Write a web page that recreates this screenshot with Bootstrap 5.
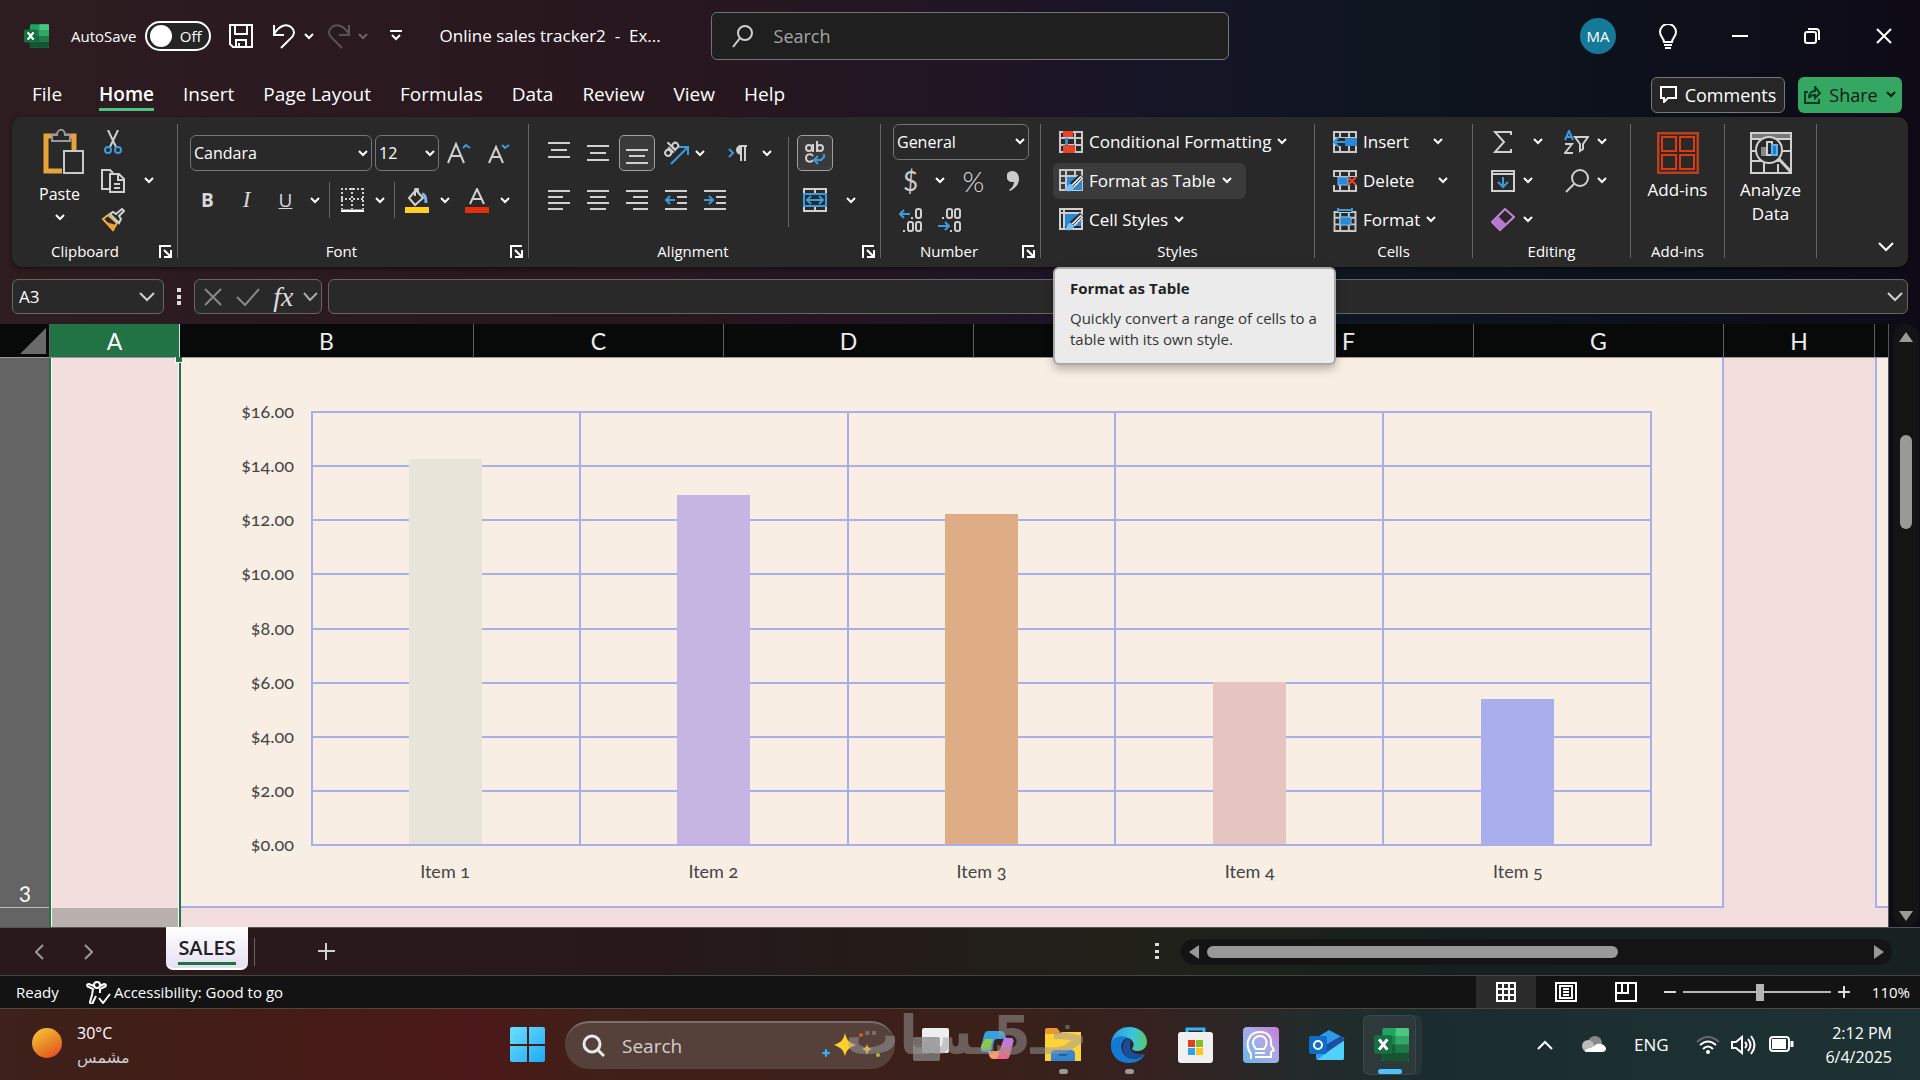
<!DOCTYPE html>
<html lang="en">
<head>
<meta charset="utf-8">
<meta name="viewport" content="width=device-width, initial-scale=1">
<title>Online sales tracker2 - Excel</title>
<link href="https://cdn.jsdelivr.net/npm/bootstrap@5.3.0/dist/css/bootstrap.min.css" rel="stylesheet">
<style>
:root{--ui:"Open Sans","Noto Sans","DejaVu Sans",sans-serif;--line:#a9aeec;--cream:#f8eee4;--pink:#f2dfdd;--panel:#292929;--edge:#666}
body{font-family:var(--ui);font-size:18px;line-height:24px;color:#fff;min-height:100vh;background:#17131f linear-gradient(90deg,#2d1c20 0,#27171e 36%,#1f1524 52%,#161527 60%,#0f1620 72%,#0d111c 84%,#0e0b17 100%)}
button{background:none;border:0;padding:0;color:inherit;display:inline-flex;align-items:center;justify-content:center}
svg{display:block;flex:none}
.ln{fill:none;stroke:#d0d0d0;stroke-width:2}
.bl{stroke:#3b9bdc}
.chev{width:10px;height:7px;fill:none;stroke:#fff;stroke-width:2}
/* title row */
.titlebar{height:72px;padding-left:24px}
.t17{font-size:17px}.t15{font-size:15px}
.asv{width:66px;height:30px;border:2px solid #fff;border-radius:15px;background:#242424;font-size:15px;padding:0 7px 0 3px;justify-content:space-between;margin-left:8px}
.knob{width:22px;height:22px;border-radius:50%;background:#fff}
.doctitle{width:220px;margin-left:34px}
.searchbox{width:518px;height:48px;border:1px solid #757575;border-radius:6px;background:#1f1f1f;margin-left:51px;padding-left:20px;gap:20px}
.searchbox input,.pill input{background:none;border:0;outline:0;color:#aaa;padding:0;min-width:0;flex:1}
.searchbox input::placeholder{color:#a5a5a5}
.avatar{width:36px;height:36px;border-radius:50%;background:#15799a;font-size:15px}
.w72{width:72px;height:44px}
/* tabs */
.tabrow{height:45px;padding:0 18px 0 32px}
.tabs{gap:29px;font-size:19px}
.tabs a{color:#fff;text-decoration:none;height:33px;padding-top:4px;border-bottom:3px solid transparent}
.tabs a.on{font-weight:600;border-color:#4cc582}
.tabs a:first-child{margin-right:8px}
.cbtn{height:36px;border-radius:6px;gap:8px}
.cmt{width:134px;background:#262626;border:1px solid #777}
.share{width:104px;background:#34a762;color:#0c1a12;margin-left:13px}
/* ribbon */
.ribbon{margin:0 12px;height:150px;border-radius:10px;background:var(--panel);box-shadow:0 2px 4px #0006}
.grp{margin:7px 0 9px;border-right:1px solid #666;display:flex;flex-direction:column;position:relative}
.grp .body{flex:1}
.foot{height:19px;display:flex;align-items:center;font-size:15px;line-height:13px;padding-top:6px}
.foot span{flex:1;text-align:center}
.foot button{width:23px}
.two{padding-top:11px;display:flex;flex-direction:column;gap:11px}
.two>div{height:36px;display:flex;align-items:center}
.three{margin-top:-2px}
.three>*{height:39px;display:flex;align-items:center}
.c39{width:39px;height:36px}
.c36{width:36px;height:36px}
.c20{width:20px;height:36px}
.boxed{width:36px;height:36px;border:1px solid #a0a0a0;border-radius:5px;background:#3a3a3a}
.vs{width:1px;height:36px;background:#666}
.form-select.dd{height:36px;background-color:transparent;border:1px solid #757575;border-radius:6px;color:#fff;font-size:16px;line-height:24px;padding:0 20px 0 3px;--bs-form-select-bg-img:url("data:image/svg+xml,%3csvg xmlns='http://www.w3.org/2000/svg' viewBox='0 0 10 7'%3e%3cpath fill='none' stroke='%23fff' stroke-width='2' d='M1 1l4 4 4-4'/%3e%3c/svg%3e");background-position:right 3px center;background-size:10px 7px}
.glyph{font-size:19px;color:#d8d8d8}
.sbtn{height:36px;border-radius:6px;padding:0 8px 0 6px;gap:6px;font-size:17px}
.sbtn.on{background:#3b3b3b;padding-right:14px}
.far{margin-left:18px}
.tip{position:absolute;left:12px;top:143px;width:283px;height:98px;background:#ebebeb;border:2px solid #a8a8a8;border-radius:6px;color:#333;font-size:15px;line-height:21px;padding:9px 0 0 15px;z-index:5;box-shadow:0 4px 10px #0004;white-space:nowrap}
.tip strong{display:block;margin-bottom:9px;color:#222}
.big{line-height:24px;flex-direction:column;font-size:17px}
.paste{width:83px;padding:4px 0 0 12px;font-size:16px}
/* formula row */
.frow{height:57px;padding:12px 12px 0}
.fbox{height:35px;border:1px solid #666;border-radius:6px;background:var(--panel);display:flex;align-items:center}
.fbox input{background:none;border:0;outline:0;color:#fff;width:100%;min-width:0;padding:0 6px}
.fx{font:italic 28px/30px "Liberation Serif",serif;color:#ddd;width:28px}
/* sheet */
.sheetwrap{flex:1;min-height:500px}
.sheet{flex:1;display:grid;grid-template-columns:50px 130px 294fr 250fr 250fr 250fr 250fr 250fr 151px 13px;grid-template-rows:34px 1fr 19px;border-right:1px solid #555}
.hd{background:#070a09;border-right:1px solid #606060;border-bottom:1px solid #999;display:flex;align-items:center;justify-content:center;font-family:Lato,"Open Sans",sans-serif;font-size:23px;padding-top:1px;color:#eee}
.hd.sel{background:#217346;border-right-color:#ddd;color:#fff}
.rowno{background:#646464;display:flex;align-items:flex-end;justify-content:center;font:23px/30px Lato,"Open Sans",sans-serif;border-bottom:1px solid #bbb;font-feature-settings:"onum";padding-bottom:2px}
.acol{position:relative;background:var(--pink);border:solid #217346;border-width:0 2px 0 2px;box-shadow:inset 1px 0 #fff,inset -1px 0 #fff;margin:0 -1px}
.handle{position:absolute;right:-3px;top:-1px;width:7px;height:6px;background:#217346;border:solid #fff;border-width:0 0 1px 1px}
.pinkc{background:var(--pink)}
.bl2{border:solid var(--line);border-width:0 0 2px 2px}
.chartc{grid-column:3/9;background:var(--cream);border:solid var(--line);border-width:0 2px 2px 0;padding:53px 70px 22px 0;display:grid;grid-template-columns:131px 1fr;grid-template-rows:1fr 38px;font-family:Lato,"Open Sans",sans-serif;font-size:18px;color:#444;font-feature-settings:"onum"}
.yax{display:flex;flex-direction:column;justify-content:space-between;text-align:right;padding-right:17px;margin:-11px 0 -9px;line-height:22px}
.plot{display:grid;grid-template:1fr/1fr;border:solid var(--line);border-width:0 0 2px 2px}
.plot>div{grid-area:1/1}
.hl i{flex:1;border-top:2px solid var(--line)}
.bars>div{flex:1 1 0;border-right:2px solid var(--line);display:flex;align-items:flex-end;justify-content:center}
.bars i{width:73px}
.cats{grid-column:2;display:flex;align-items:center;padding-top:12px}
.cats span{flex:1;text-align:center}
.vsb{width:26px;margin:0 1px 0 4px;background:#141414;border-radius:13px;padding:8px 0 6px;display:flex;flex-direction:column;align-items:center}
.thumb{background:#999;border-radius:6px}
/* sheet tabs */
.stabs{height:48px;background:linear-gradient(90deg,#2a191a 0,#27191a 35%,#221d19 50%,#202119 60%,#16211f 75%,#17211f 100%);border-top:1px solid #555}
.stab{width:82px;height:43px;align-self:flex-start;border-radius:0 0 7px 7px;background:linear-gradient(#fff,#e6e0f3);color:#222;margin-left:54px;border-bottom:2px solid #fff;font-weight:600;font-size:20px;margin-top:-1px}
.stab span{border-bottom:3px solid #1f7244;line-height:29px;padding-top:3px}
.hsb{width:711px;height:26px;border-radius:13px;background:#141414;padding:0 8px;gap:8px;margin:0 28px 0 22px}
/* status */
.status{height:34px;background:#131313;border-top:1px solid #444;border-bottom:1px solid #54433a;font-size:15px;padding:0 10px 0 16px}
.vw{width:60px;height:32px}
.vw.on{background:#2b2b2b}
.zoomr{appearance:none;width:148px;height:24px;background:linear-gradient(#b5b5b5,#b5b5b5) center/100% 2px no-repeat;margin:0 7px}
.zoomr::-webkit-slider-thumb{-webkit-appearance:none;width:8px;height:17px;background:#b5b5b5}
/* taskbar */
.taskbar{height:71px;background:linear-gradient(90deg,#3d211a 0,#451c17 14%,#4b1919 25%,#402019 31%,#3a2019 52%,#352220 60%,#232b2b 68%,#1b2c2e 75%,#1d3234 100%);padding:0 28px 0 32px}
.weather{margin-left:15px;width:433px}
.pill{width:330px;height:48px;border-radius:24px;background:#55403a;border-top:2px solid #767170;padding:0 14px 0 17px;margin-left:19px;gap:17px;font-size:19px}
.pill input{color:#ddd}.pill input::placeholder{color:#d5d0ce}
.app{width:66px;height:60px;flex-direction:column;position:relative}
.app.run::after{content:"";position:absolute;bottom:1px;width:9px;height:5px;border-radius:3px;background:#999}
.app.act::before{content:"";position:absolute;left:3px;top:0;width:53px;height:60px;border-radius:6px;background:#ffffff12;border:1px solid #ffffff14;box-shadow:6px 0 0 #ffffff0c}
.app.act svg{position:relative}
.app.act.run::after{width:24px;left:18px;background:#4cc2ff}
.wm{position:absolute;left:845px;top:-11px;font:bold 54px/76px "DejaVu Sans",sans-serif;color:#9c9c9c;opacity:.5;white-space:nowrap;pointer-events:none;z-index:3}
.zz{color:#fff;font-size:16px;line-height:24px}
</style>
</head>
<body class="d-flex flex-column">
<svg width="0" height="0" class="position-absolute" aria-hidden="true">
<symbol id="cv" viewBox="0 0 10 7"><path d="M1 1l4 4 4-4"/></symbol>
<symbol id="launch" viewBox="0 0 13 13"><path d="M1 13V1h11M5 5l6 6M12 5v7H5" fill="none" stroke="#fff" stroke-width="2"/></symbol>
<symbol id="xl" viewBox="0 0 34 32"><path d="M10 0h24v32H8V2a2 2 0 0 1 2-2z" fill="#21a366"/><path d="M21 0h11a2 2 0 0 1 2 2v6H21z" fill="#4cc582"/><path d="M8 8h13v8H8z" fill="#1c8a50"/><path d="M21 8h13v8H21z" fill="#33a866"/><path d="M8 16h13v8H8z" fill="#185c37"/><path d="M21 16h13v8H21z" fill="#1f7a48"/><path d="M8 24h26v6a2 2 0 0 1-2 2H10a2 2 0 0 1-2-2z" fill="#16532f"/><rect y="7" width="18" height="18" rx="2" fill="#17703f"/><path d="M5 11l8 10M13 11L5 21" stroke="#fff" stroke-width="3"/></symbol>
<symbol id="grid" viewBox="0 0 24 22"><path d="M1 1h22v20H1zM1 7h22M1 14h22M7 1v20M16 1v20" fill="none" stroke="#c8c8c8" stroke-width="2"/></symbol>
<symbol id="brush" viewBox="0 0 24 24"><path d="M23 7L13 16" stroke="#292929" stroke-width="6"/><path d="M23 8l-9 9" stroke="#e0e0e0" stroke-width="4"/><path d="M22 9l-8 8" stroke="#333" stroke-width="1"/><path d="M12 15c-4 0-4 5-7 6 3 2 10 2 10-3z" fill="#7cc0f5"/></symbol>
</svg>

<header class="titlebar d-flex align-items-center">
 <svg width="25" height="24"><use href="#xl"/></svg>
 <span class="t15" style="margin-left:22px" id="asl">AutoSave</span>
 <button class="asv" role="switch" aria-checked="false" aria-labelledby="asl"><span class="knob"></span><span>Off</span></button>
 <button class="px-1" style="margin-left:14px" aria-label="Save"><svg width="24" height="24" class="ln" viewBox="0 0 24 24" style="stroke:#fff"><path d="M1 1h22v22H4l-3-3zM6 1v9h12V1M7 23v-7h10v7M10 23v-4"/></svg></button>
 <button style="margin-left:15px" aria-label="Undo"><svg width="24" height="26" class="ln" viewBox="0 0 24 26" style="stroke:#fff"><path d="M2 2v10h10M2 11C7 3 14 0 19 4s3 9-1 12l-9 9"/></svg></button>
 <button class="c20" style="margin-left:3px" aria-label="Undo list"><svg class="chev"><use href="#cv"/></svg></button>
 <button class="ms-1" aria-label="Redo"><svg width="24" height="26" class="ln ms-1" viewBox="0 0 24 26" style="stroke:#555"><path d="M22 2v10H12M22 11C17 3 10 0 5 4s-3 9 1 12l9 9"/></svg></button>
 <button class="c20" style="margin-left:2px" aria-label="Redo list"><svg class="chev" style="stroke:#666"><use href="#cv"/></svg></button>
 <button class="px-1" style="margin-left:13px" aria-label="Customize toolbar"><svg width="12" height="12" class="ln" style="stroke:#fff"><path d="M0 1h12M2 5l4 4 4-4"/></svg></button>
 <span class="doctitle t17 text-nowrap">Online sales tracker2 &nbsp;-&nbsp; Ex...</span>
 <label class="searchbox d-flex align-items-center"><svg width="22" height="24" class="ln" viewBox="0 0 22 24"><circle cx="13" cy="9" r="7"/><path d="M8 14L1 23"/></svg><input type="search" placeholder="Search" aria-label="Search"></label>
 <div class="ms-auto d-flex align-items-center">
  <span class="avatar d-flex align-items-center justify-content-center me-3">MA</span>
  <button class="w72" aria-label="Tips"><svg width="18" height="25" class="ln" viewBox="0 0 18 25" style="stroke:#fff"><path d="M5 18c0-4-4-5-4-10a8 8 0 0 1 16 0c0 5-4 6-4 10zM5 21h8M6 24h6"/></svg></button>
  <button class="w72" aria-label="Minimize"><svg width="16" height="2"><path d="M0 1h16" stroke="#fff" stroke-width="2"/></svg></button>
  <button class="w72" aria-label="Restore"><svg width="16" height="16" class="ln" style="stroke:#fff"><rect x="1" y="4" width="11" height="11" rx="2"/><path d="M4 1h8a3 3 0 0 1 3 3v8"/></svg></button>
  <button class="w72" aria-label="Close"><svg width="16" height="16" class="ln" style="stroke:#fff"><path d="M1 1l14 14M15 1L1 15"/></svg></button>
 </div>
</header>

<div class="tabrow d-flex align-items-center">
 <nav class="tabs d-flex" aria-label="Ribbon tabs"><a href="#">File</a><a href="#" class="on">Home</a><a href="#">Insert</a><a href="#">Page Layout</a><a href="#">Formulas</a><a href="#">Data</a><a href="#">Review</a><a href="#">View</a><a href="#">Help</a></nav>
 <button class="cbtn cmt ms-auto"><svg width="17" height="17" class="ln" style="stroke:#fff"><path d="M1 1h15v11H8l-4 4v-4H1z"/></svg>Comments</button>
 <button class="cbtn share"><svg width="17" height="18" class="ln" style="stroke:#0c3a20"><path d="M4 6H1v11h14v-4M5 12c0-5 3-7 6-7V1l5 6-5 5V9c-3 0-5 1-6 3z"/></svg>Share<svg class="chev" style="stroke:#0c1a12"><use href="#cv"/></svg></button>
</div>

<section class="ribbon d-flex" aria-label="Ribbon">
 <div class="grp" style="width:166px"><div class="body d-flex">
   <button class="big paste justify-content-start"><svg class="ms-2" width="42" height="46" viewBox="0 0 42 46"><path d="M19 43H3V8h28v14" fill="none" stroke="#e8a33a" stroke-width="5"/><path d="M9 13V7h5c0-7 8-7 8 0h5v6z" fill="#292929" stroke="#999" stroke-width="2"/><rect x="21" y="23" width="19" height="22" fill="#292929" stroke="#c8c8c8" stroke-width="2"/></svg><span class="mt-2">Paste</span><svg class="chev mt-2"><use href="#cv"/></svg></button>
   <div class="three">
    <div><button class="c36" aria-label="Cut"><svg width="18" height="24" class="ln" viewBox="0 0 18 24"><path d="M4 0l8 17M14 0L6 17"/><g class="bl"><circle cx="4" cy="20" r="3"/><circle cx="14" cy="20" r="3"/></g></svg></button></div>
    <div><button class="c36" aria-label="Copy"><svg width="24" height="24" class="ln" viewBox="0 0 24 24"><path d="M8 20H1V1h8l3 3M9 5h9l5 5v13H9zM17 5v6h6M13 15h6M13 19h6"/></svg></button><button class="c20 ms-2" aria-label="Copy options"><svg class="chev"><use href="#cv"/></svg></button></div>
    <div><button class="c36" aria-label="Format painter"><svg width="24" height="24" viewBox="0 0 24 24"><path d="M2 11l10 11 4-7-9-8z" fill="#292929" stroke="#efb04a" stroke-width="2"/><path d="M5 14l7 8 3-5z" fill="#efa030"/><path d="M9 6l9 9 2-4-2-3 5-5-2-2-6 5-3-2z" fill="#292929" stroke="#d0d0d0" stroke-width="2"/></svg></button></div>
   </div></div>
   <div class="foot"><span class="ps-1">Clipboard</span><button aria-label="Clipboard settings"><svg width="13" height="13"><use href="#launch"/></svg></button></div></div>

 <div class="grp" style="width:351px"><div class="body two">
   <div style="padding-left:12px"><select class="form-select dd" style="width:182px;margin-right:3px" aria-label="Font"><option>Candara</option></select><select class="form-select dd" style="width:64px" aria-label="Font size"><option>12</option></select>
   <button class="c39" aria-label="Grow font"><svg width="24" height="22" class="ln" viewBox="0 0 24 22"><path d="M1 21L9 2l8 19M4 14h10"/><path class="bl" d="M16 6l3-3 4 3"/></svg></button><button class="c39" aria-label="Shrink font"><svg width="24" height="22" class="ln" viewBox="0 0 24 22"><path d="M3 21L10 5l7 16M5 15h10"/><path class="bl" d="M16 3l3 3 4-3"/></svg></button></div>
   <div style="padding-left:10px"><button class="c39 glyph fw-bold">B</button><button class="c39 glyph fst-italic" style="font-family:'Liberation Serif',serif;font-size:23px">I</button><button class="c39 glyph text-decoration-underline">U</button><button class="c20" aria-label="Underline options"><svg class="chev"><use href="#cv"/></svg></button><span class="vs ms-1"></span>
   <button class="c36 ms-1" aria-label="Borders"><svg width="23" height="24" class="ln" viewBox="0 0 23 24"><path d="M1 0v21M22 0v21M11 0v21M0 1h23M0 11h23" stroke-dasharray="2 2"/><path d="M0 23h23" stroke="#fff" stroke-width="3"/></svg></button><button class="c20" aria-label="Border options"><svg class="chev"><use href="#cv"/></svg></button><span class="vs ms-1"></span>
   <button class="c36 ms-1" aria-label="Fill color"><svg width="24" height="25" viewBox="0 0 24 25"><path d="M4 10l7-8 7 8-8 7zM10 8V2c0-2 3-2 3 0v3" class="ln"/><path d="M17 6c3 0 4 4 4 9" fill="none" stroke="#7ab8ee" stroke-width="3"/><path d="M0 19h24v6H0z" fill="#ffd21f"/></svg></button><button class="c20" aria-label="Fill options"><svg class="chev"><use href="#cv"/></svg></button>
   <button class="c36 ms-1" aria-label="Font color"><svg width="24" height="25" viewBox="0 0 24 25"><path d="M5 16L12 1l7 15M7 11h10" class="ln"/><path d="M0 19h24v6H0z" fill="#e3300b"/></svg></button><button class="c20" aria-label="Font color options"><svg class="chev"><use href="#cv"/></svg></button></div></div>
   <div class="foot"><span>Font</span><button aria-label="Font settings"><svg width="13" height="13"><use href="#launch"/></svg></button></div></div>

 <div class="grp" style="width:352px"><div class="body d-flex">
   <div class="two" style="width:259px;padding-left:10px">
   <div><button class="c39" aria-label="Top align"><svg width="22" height="22" class="ln"><path d="M0 4h22M3 11h16M0 18h22" transform="translate(0 -3)"/></svg></button><button class="c39" aria-label="Middle align"><svg width="22" height="22" class="ln"><path d="M0 4h22M3 11h16M0 18h22"/></svg></button><button class="c39" aria-label="Bottom align"><span class="boxed d-flex align-items-center justify-content-center"><svg width="22" height="22" class="ln"><path d="M0 4h22M3 10h16M0 17h22" transform="translate(0 4)"/></svg></span></button><button class="c39" aria-label="Orientation"><svg width="26" height="26" class="ln" viewBox="0 0 26 26"><g transform="rotate(-45 8 10)"><circle cx="4" cy="10" r="3"/><path d="M8 6v8M11 2v12"/><circle cx="14" cy="10" r="3"/></g><path class="bl" d="M8 24L24 8M16 7h9v8"/></svg></button><button class="c20" style="margin-left:-5px" aria-label="Orientation options"><svg class="chev"><use href="#cv"/></svg></button><button class="c39 ms-2" aria-label="Text direction"><svg width="20" height="16" class="ln" viewBox="0 0 20 16"><path class="bl" d="M1 4l4 4-4 4"/><path d="M13 1v15M17 1v15M19 1h-8"/><path d="M13 1v8a4 4 0 0 1 0-8z" fill="#d0d0d0"/></svg></button><button class="c20" aria-label="Direction options"><svg class="chev"><use href="#cv"/></svg></button></div>
   <div><button class="c39" aria-label="Align left"><svg width="22" height="22" class="ln"><path d="M0 2h22M0 8h15M0 14h22M0 20h15"/></svg></button><button class="c39" aria-label="Align center"><svg width="22" height="22" class="ln"><path d="M0 2h22M3 8h16M0 14h22M3 20h16"/></svg></button><button class="c39" aria-label="Align right"><svg width="22" height="22" class="ln"><path d="M0 2h22M7 8h15M0 14h22M7 20h15"/></svg></button><button class="c39" aria-label="Decrease indent"><svg width="22" height="22" class="ln"><path d="M0 2h22M12 8h10M12 14h10M0 20h22"/><path class="bl" d="M10 11H2M5 7l-4 4 4 4"/></svg></button><button class="c39" aria-label="Increase indent"><svg width="22" height="22" class="ln"><path d="M0 2h22M12 8h10M12 14h10M0 20h22"/><path class="bl" d="M0 11h8M5 7l4 4-4 4"/></svg></button></div></div>
   <span class="vs" style="height:90px;margin-top:13px"></span>
   <div class="two ps-2"><div><button class="boxed" aria-label="Wrap text"><svg width="22" height="26" class="ln" viewBox="0 0 22 26"><circle cx="5" cy="8" r="3"/><path d="M9 4v8M13 1v11M9 20c-2 3-7 2-7-2s5-5 7-2"/><circle cx="16" cy="8" r="3"/><path class="bl" d="M20 14v3l-3 3h-6M14 16l-4 4 4 4"/></svg></button></div>
   <div><button class="c36" aria-label="Merge"><svg width="24" height="24" class="ln" viewBox="0 0 24 24"><path d="M1 1h22v22H1zM12 1v5M12 18v5"/><path class="bl" d="M1 6h22v12H1zM4 12h16M8 8l-4 4 4 4M16 8l4 4-4 4"/></svg></button><button class="c20 ms-2" aria-label="Merge options"><svg class="chev"><use href="#cv"/></svg></button></div></div></div>
   <div class="foot"><span>Alignment</span><button aria-label="Alignment settings"><svg width="13" height="13"><use href="#launch"/></svg></button></div></div>

 <div class="grp" style="width:160px"><div class="body three" style="padding-left:10px">
   <div><select class="form-select dd" style="width:136px;margin-left:2px" aria-label="Number format"><option>General</option></select></div>
   <div><button class="c39" style="font-size:26px;font-family:Lato,sans-serif;color:#ccc">$</button><button class="c20" aria-label="Currency options"><svg class="chev"><use href="#cv"/></svg></button><button class="c39 ms-1" style="font-size:28px;font-family:Lato,sans-serif;font-weight:300;color:#ddd">%</button><button class="c39" aria-label="Comma style"><svg width="12" height="20" viewBox="0 0 12 20"><path d="M5 0c5 0 7 4 7 8 0 6-5 10-9 12l-1-1c3-2 5-5 5-8H5A5 5 0 0 1 5 0z" fill="#ccc"/></svg></button></div>
   <div><button class="c39" aria-label="Increase decimal"><svg width="24" height="24" class="ln" viewBox="0 0 24 24"><path class="bl" d="M1 6h10M5 2L1 6l4 4"/><rect x="17" y="1" width="5" height="9" rx="2"/><rect x="9" y="14" width="5" height="9" rx="2"/><rect x="17" y="14" width="5" height="9" rx="2"/><path d="M12 10h2M4 23h2"/></svg></button><button class="c39" aria-label="Decrease decimal"><svg width="24" height="24" class="ln" viewBox="0 0 24 24"><path class="bl" d="M0 18h11M7 14l4 4-4 4"/><rect x="17" y="14" width="5" height="9" rx="2"/><rect x="9" y="1" width="5" height="9" rx="2"/><rect x="17" y="1" width="5" height="9" rx="2"/><path d="M12 23h2M4 10h2"/></svg></button></div></div>
   <div class="foot"><span>Number</span><button aria-label="Number settings"><svg width="13" height="13"><use href="#launch"/></svg></button></div></div>

 <div class="grp" style="width:274px"><div class="body three" style="padding-left:12px">
   <div><button class="sbtn"><svg width="24" height="22"><use href="#grid"/><path d="M4 0h10v6H4zM4 14h12v8H4z" fill="#e8442c"/><path d="M6 7h3v7H6z" fill="#2f8fd8"/></svg>Conditional Formatting<svg class="chev"><use href="#cv"/></svg></button></div>
   <div><button class="sbtn on" aria-describedby="tip1"><svg width="24" height="24"><use href="#grid" height="22"/><path d="M8 8h15v13H8z" fill="#2a88d4"/><use href="#brush"/></svg>Format as Table<svg class="chev"><use href="#cv"/></svg></button></div>
   <div><button class="sbtn"><svg width="24" height="24"><path d="M1 1h22v20H1zM1 5h22M5 1v20" class="ln"/><path d="M6 6h16v12H6z" fill="#2a88d4"/><use href="#brush"/></svg>Cell Styles<svg class="chev"><use href="#cv"/></svg></button></div></div>
   <div class="foot"><span>Styles</span></div>
   <div class="tip" role="tooltip" id="tip1"><strong>Format as Table</strong>Quickly convert a range of cells to a<br>table with its own style.</div></div>

 <div class="grp" style="width:158px"><div class="body three" style="padding-left:12px">
   <div><button class="sbtn"><svg width="24" height="22"><use href="#grid"/><path d="M3 7h21v8H3z" fill="#292929"/><path d="M12 7h12v8H12z" fill="#2a88d4"/><path d="M12 11H1M6 6l-5 5 5 5" class="ln bl"/></svg>Insert<svg class="chev far"><use href="#cv"/></svg></button></div>
   <div><button class="sbtn"><svg width="24" height="22"><use href="#grid"/><path d="M0 7h24v8H0z" fill="#292929"/><path d="M5 7h10v8H5z" fill="#2a88d4" stroke="#7cc0f5"/><path d="M15 7l8 8M23 7l-8 8" stroke="#e8442c" stroke-width="2"/></svg>Delete<svg class="chev far"><use href="#cv"/></svg></button></div>
   <div><button class="sbtn"><svg width="24" height="24"><use href="#grid" y="3" height="21"/><path d="M5 0h14v4H5z" fill="#292929"/><path d="M5 2h14M5 0v4M19 0v4" class="ln bl"/><path d="M7 9h11v8H7z" fill="#2a88d4" stroke="#7cc0f5"/></svg>Format<svg class="chev"><use href="#cv"/></svg></button></div></div>
   <div class="foot"><span>Cells</span></div></div>

 <div class="grp" style="width:158px"><div class="body d-flex" style="padding-left:10px">
  <div class="three" style="width:74px">
   <div><button class="c39" aria-label="Sum"><svg width="20" height="22" class="ln" viewBox="0 0 20 22"><path d="M18 4V1H2l9 10-9 10h16v-3"/></svg></button><button class="c20" style="margin-left:6px" aria-label="Sum options"><svg class="chev"><use href="#cv"/></svg></button></div>
   <div><button class="c39" aria-label="Fill"><svg width="24" height="22" class="ln"><path d="M1 1h22v20H1zM1 4h22"/><path class="bl" d="M12 7v10M7 12l5 5 5-5"/></svg></button><button class="c20" style="margin-left:-4px" aria-label="Fill options"><svg class="chev"><use href="#cv"/></svg></button></div>
   <div><button class="c39" aria-label="Clear"><svg width="24" height="24" viewBox="0 0 24 24"><path d="M1 14L14 1l9 8L9 22z" fill="none" stroke="#c583dc" stroke-width="2"/><path d="M1 14l6-6 8 8-6 6z" fill="#b678cd"/></svg></button><button class="c20" style="margin-left:-4px" aria-label="Clear options"><svg class="chev"><use href="#cv"/></svg></button></div></div>
  <div class="three">
   <div><button class="c39" aria-label="Sort and filter"><svg width="25" height="24" class="ln" viewBox="0 0 25 24"><path class="bl" d="M1 10L5 1l4 9M2 7h6"/><path d="M1 14h7L1 23h8M11 7h13l-5 7v5l-3 2v-7z"/></svg></button><button class="c20" style="margin-left:-4px" aria-label="Sort options"><svg class="chev"><use href="#cv"/></svg></button></div>
   <div><button class="c39" aria-label="Find"><svg width="24" height="24" class="ln" viewBox="0 0 24 24"><circle cx="15" cy="9" r="8"/><path d="M9 15l-8 8"/></svg></button><button class="c20" style="margin-left:-4px" aria-label="Find options"><svg class="chev"><use href="#cv"/></svg></button></div></div></div>
   <div class="foot"><span>Editing</span></div></div>

 <div class="grp" style="width:94px"><div class="body"><button class="big w-100 pt-1"><svg width="42" height="42" class="mt-1" fill="none" stroke="#e0390f" stroke-width="2"><rect x="1" y="1" width="40" height="40" stroke="#b8401d" stroke-width="3"/><path d="M5 5h14v14H5zM23 5h14v14H23zM5 23h14v14H5zM23 23h14v14H23z"/></svg><span class="mt-1">Add-ins</span></button></div><div class="foot"><span>Add-ins</span></div></div>
 <div class="grp" style="width:92px"><div class="body"><button class="big w-100 pt-1"><svg width="42" height="42" class="ln mt-1" viewBox="0 0 42 42"><path d="M0 0h42v6H0z" fill="#777" stroke="none"/><path d="M1 1h40v40H1zM1 7h40M1 19h6M33 19h8M1 29h28M14 29v12M28 32v9"/><circle cx="19" cy="18" r="13" fill="#292929"/><path d="M29 27l12 13" stroke-width="3"/><path d="M12 16h4v7h-4z" stroke="#888" fill="#888"/><path d="M17 10h5v13h-5z"/><path d="M22 13h5v10h-5z" fill="#1a7fd0" stroke="#5bb0f0"/></svg><span class="mt-1">Analyze<br>Data</span></button></div></div>
 <button class="ms-auto align-self-end" style="width:44px;height:40px" aria-label="Collapse ribbon"><svg width="16" height="10" class="ln" style="stroke:#fff"><path d="M1 1l7 7 7-7"/></svg></button>
</section>

<div class="frow d-flex">
 <div class="fbox" style="width:152px"><input value="A3" aria-label="Name box" style="font-size:17px"><button class="pe-2" aria-label="Names"><svg width="16" height="10" class="ln"><path d="M1 1l7 7 7-7"/></svg></button></div>
 <svg width="30" height="34"><path d="M13 9h4v4h-4zM13 16h4v4h-4zM13 22h4v4h-4z" fill="#ddd"/></svg>
 <div class="fbox justify-content-between" style="width:128px;padding:0 3px 0 9px"><button aria-label="Cancel"><svg width="18" height="18" class="ln" style="stroke:#888"><path d="M1 1l16 16M17 1L1 17"/></svg></button><button class="ms-2" aria-label="Enter"><svg width="24" height="18" class="ln" style="stroke:#888"><path d="M1 9l8 8L23 1"/></svg></button><button class="fx ms-1" aria-label="Insert function">fx</button><button aria-label="Function list"><svg width="15" height="10" class="ln" style="stroke:#aaa"><path d="M1 1l6 7 7-7"/></svg></button></div>
 <div class="fbox flex-fill" style="margin-left:6px"><input aria-label="Formula"><button class="pe-1" aria-label="Expand formula bar"><svg width="16" height="10" class="ln"><path d="M1 1l7 7 7-7"/></svg></button></div>
</div>

<main class="sheetwrap d-flex">
 <div class="sheet">
  <div class="hd justify-content-end align-items-end p-0"><svg width="29" height="29"><path d="M26 0v26H0z" fill="#6a6a6a"/></svg></div>
  <div class="hd sel">A</div><div class="hd">B</div><div class="hd">C</div><div class="hd">D</div><div class="hd">E</div><div class="hd">F</div><div class="hd">G</div><div class="hd">H</div><div class="hd border-end-0"></div>
  <div class="rowno">3</div>
  <div class="acol"><span class="handle"></span></div>
  <div class="chartc">
   <div class="yax"><span>$16.00</span><span>$14.00</span><span>$12.00</span><span>$10.00</span><span>$8.00</span><span>$6.00</span><span>$4.00</span><span>$2.00</span><span>$0.00</span></div>
   <div class="plot"><div class="hl d-flex flex-column"><i></i><i></i><i></i><i></i><i></i><i></i><i></i><i></i></div>
    <div class="bars d-flex"><div><i style="height:89%;background:#e8e4d9"></i></div><div><i style="height:80.6%;background:#c6b5e3"></i></div><div><i style="height:76.2%;background:#dfad85"></i></div><div><i style="height:37.5%;background:#e6c4bf"></i></div><div><i style="height:33.5%;background:#a9aeec"></i></div></div></div>
   <div class="cats"><span>Item 1</span><span>Item 2</span><span>Item 3</span><span>Item 4</span><span>Item 5</span></div>
  </div>
  <div class="pinkc"></div>
  <div class="bl2" style="background:var(--cream)"></div>
  <div class="rowno border-0"></div><div class="acol" style="background:#b9afac"></div><div class="pinkc" style="grid-column:3/11"></div>
 </div>
 <div class="vsb"><svg width="14" height="10"><path d="M7 0l7 10H0z" fill="#999"/></svg><span class="thumb" style="width:12px;height:94px;margin-top:93px"></span><svg class="mt-auto" width="14" height="10"><path d="M0 0h14L7 10z" fill="#999"/></svg></div>
</main>

<div class="stabs d-flex align-items-center flex-shrink-0">
 <button style="width:24px;margin-left:27px" aria-label="Previous sheet"><svg width="9" height="16" class="ln" style="stroke:#999"><path d="M8 1L1 8l7 7"/></svg></button>
 <button style="width:24px;margin-left:25px;margin-right:12px" aria-label="Next sheet"><svg width="9" height="16" class="ln" style="stroke:#999"><path d="M1 1l7 7-7 7"/></svg></button>
 <button class="stab"><span>SALES</span></button><span class="vs" style="height:28px;margin-left:6px"></span>
 <button style="margin-left:63px" aria-label="New sheet"><svg width="17" height="17" class="ln"><path d="M0 8h17M8 0v17"/></svg></button>
 <svg class="ms-auto" width="4" height="17"><path d="M0 0h4v3H0zM0 7h4v3H0zM0 13h4v3H0z" fill="#ddd"/></svg>
 <div class="hsb d-flex align-items-center"><svg width="10" height="14"><path d="M0 7l10-7v14z" fill="#999"/></svg><span class="thumb" style="width:411px;height:12px"></span><svg class="ms-auto" width="10" height="14"><path d="M10 7L0 0v14z" fill="#999"/></svg></div>
</div>

<div class="status d-flex align-items-center flex-shrink-0">
 <span style="width:70px">Ready</span>
 <button><svg width="25" height="23" class="ln" viewBox="0 0 25 23" style="stroke:#fff"><circle cx="11" cy="4" r="3"/><path d="M8 5L3 3C0 3 1 6 3 6l4 2-1 6-2 7c0 2 3 2 3 0l3-6M14 5l4-2c3 0 2 3 0 3l-4 2v4M13 17l4 5 7-9"/></svg><span style="margin-left:3px">Accessibility: Good to go</span></button>
 <div class="ms-auto d-flex align-items-center">
  <button class="vw on" aria-label="Normal view"><svg width="20" height="20" class="ln" style="stroke:#fff"><path d="M1 1h18v18H1zM1 7h18M1 13h18M7 1v18M13 1v18"/></svg></button>
  <button class="vw" aria-label="Page layout view"><svg width="22" height="20" class="ln" style="stroke:#fff"><path d="M1 1h20v18H1zM5 4h12v12H5zM8 7h6M8 10h6M8 13h6"/></svg></button>
  <button class="vw" aria-label="Page break view"><svg width="22" height="20" class="ln" style="stroke:#fff"><path d="M1 1h20v18H1zM1 11h12V1M7 1v10"/></svg></button>
  <button aria-label="Zoom out" class="ms-2"><svg width="12" height="2"><path d="M0 1h12" stroke="#ddd" stroke-width="2"/></svg></button>
  <input type="range" class="zoomr" min="0" max="100" value="52" aria-label="Zoom">
  <button aria-label="Zoom in"><svg width="12" height="12"><path d="M0 6h12M6 0v12" stroke="#ddd" stroke-width="2"/></svg></button>
  <span class="text-end" style="width:60px">110%</span></div>
</div>

<footer class="taskbar d-flex align-items-center flex-shrink-0 position-relative">
 <svg width="30" height="30" class="mb-1"><defs><linearGradient id="sun" x1="0" y1="0" x2=".6" y2="1"><stop stop-color="#fc3"/><stop offset=".5" stop-color="#e8952c"/><stop offset="1" stop-color="#e8591e"/></linearGradient></defs><circle cx="15" cy="15" r="15" fill="url(#sun)"/></svg>
 <div class="zz weather"><div>30°C</div><div style="color:#ccc" lang="ar">مشمس</div></div>
 <button aria-label="Start"><svg width="36" height="36"><defs><linearGradient id="wn" x2="1" y2="1"><stop stop-color="#6ae0ff"/><stop offset="1" stop-color="#1fa8f5"/></linearGradient></defs><path d="M0 2q0-2 2-2h15v17H0zM19 0h14q2 0 2 2v15H19zM0 19h17v16H2q-2 0-2-2zM19 19h16v14q0 2-2 2H19z" fill="url(#wn)"/></svg></button>
 <label class="pill d-flex align-items-center"><svg width="23" height="23" fill="none" stroke="#e8e8e8" stroke-width="3"><circle cx="10" cy="10" r="8"/><path d="M16 16l6 6"/></svg><input type="search" placeholder="Search" aria-label="Search Windows"><svg width="62" height="28"><path d="M26 1c2 8 4 9 11 12-7 3-9 4-11 11-2-7-4-8-11-11 7-3 9-4 11-12z" fill="#ffcf2e"/><path d="M48 12c1 4 2 4 5 5-3 1-4 2-5 6-1-4-2-5-5-6 3-1 4-1 5-5z" fill="#ffcf2e"/><path d="M7 17l1 3 3 1-3 1-1 3-1-3-3-1 3-1z" fill="#34b0f5" stroke="#34b0f5"/><circle cx="42" cy="3" r="2" fill="#e8501e"/><circle cx="59" cy="23" r="2" fill="#9fc13a"/></svg></label>
 <div class="d-flex align-items-center">
 <button class="app" style="margin-left:3px" aria-label="Task view"><svg width="36" height="34"><rect x="9" y="0" width="27" height="25" rx="2" fill="#eee"/><rect y="9" width="27" height="24" rx="2" fill="#888b" /></svg></button>
 <button class="app" aria-label="Copilot"><svg width="34" height="32" viewBox="0 0 34 32"><path d="M8 2h13c4 0 4 5 6 8H17c-3 0-3 3-4 7s-3 6-6 6H4c-3 0-4-2-3-5L4 6c1-3 2-4 4-4z" fill="#3a9fe0"/><path d="M5 10h8l-3 11H4c-3 0-3-2-3-4z" fill="#8cc84b"/><path d="M26 30H14c-4 0-5-4-6-8h9c3 0 4-3 5-7s3-6 6-6h2c3 0 4 2 3 5l-3 12c-1 3-2 4-4 4z" fill="#ec6a8c"/><path d="M8 22h12l-3 8h-4c-3 0-4-4-5-8z" fill="#f0a070"/><path d="M24 9h6c3 0 4 2 3 5l-1 4H21z" fill="#bd7be0"/></svg></button>
 <button class="app run" aria-label="File Explorer"><svg width="36" height="34"><path d="M0 2q0-2 2-2h10l3 4v7H0z" fill="#e8982c"/><path d="M0 6h14l3-2h19v29H0z" fill="#ffd23a"/><path d="M6 33v-7q0-4 4-4h16q4 0 4 4v7z" fill="#3585d0"/><path d="M14 27h8" stroke="#2360a0" stroke-width="2"/></svg></button>
 <button class="app run" aria-label="Edge"><svg width="36" height="36" viewBox="0 0 36 36"><defs><linearGradient id="eg" x2="1"><stop stop-color="#2398e8"/><stop offset=".6" stop-color="#3cc4dc"/><stop offset="1" stop-color="#54c968"/></linearGradient></defs><path d="M0 17C1 6 9 0 18 0c11 0 18 7 18 15 0 6-5 9-9 9-5 0-7-2-5-4 2-3 0-7-5-9-7-3-14 1-17 6z" fill="url(#eg)"/><path d="M0 17c2-7 10-10 17-6-8 1-10 15 1 20 6 3 12-1 16-4-3 6-9 9-16 9C7 36-1 28 0 17z" fill="#1379d4"/><path d="M17 11c-8 4-7 20 5 21 5 0 9-2 12-5-6 1-14 0-15-7 0-3 1-5 0-7z" fill="#174f96"/></svg></button>
 <button class="app" aria-label="Store"><svg width="35" height="36"><path d="M9 7V2h17v5" fill="none" stroke="#34b6f5" stroke-width="3"/><rect y="5" width="35" height="31" rx="3" fill="#f0f0f0"/><path d="M10 13h7v7h-7z" fill="#e0401c"/><path d="M18 13h7v7h-7z" fill="#8abf20"/><path d="M10 21h7v7h-7z" fill="#2fa4e8"/><path d="M18 21h7v7h-7z" fill="#fcc520"/></svg></button>
 <button class="app" aria-label="Assistant"><svg width="36" height="36" viewBox="0 0 36 36"><defs><linearGradient id="hd" x1="0" y1="1" x2="1" y2="0"><stop stop-color="#65b8ec"/><stop offset=".55" stop-color="#abaae8"/><stop offset="1" stop-color="#c878d8"/></linearGradient></defs><rect width="36" height="36" rx="4" fill="url(#hd)"/><path d="M8 32v-5C2 19 4 5 17 5c9 0 12 6 11 13l3 5-3 2v5H12M12 26h10M13 22c-6-6-2-13 4-13s9 7 4 13z" fill="none" stroke="#fff" stroke-width="2"/></svg></button>
 <button class="app" aria-label="Outlook"><svg width="36" height="30"><path d="M7 8L20 0l15 8v20q0 2-2 2H9q-2 0-2-2z" fill="#2f9be8"/><path d="M35 10v18q0 2-2 2H8z" fill="#50d0fa"/><path d="M15 16l17-10 4 4-18 12z" fill="#1d4ea0"/><rect y="6" width="18" height="18" rx="2" fill="#0f6cc8"/><circle cx="9" cy="15" r="4" fill="none" stroke="#fff" stroke-width="2"/></svg></button>
 <button class="app act run" aria-label="Excel"><svg width="35" height="33" class="me-1"><use href="#xl"/></svg></button></div>
 <div class="ms-auto d-flex align-items-center zz">
  <button aria-label="Hidden icons"><svg width="16" height="10" class="ln" style="stroke:#fff"><path d="M1 9l7-7 7 7"/></svg></button>
  <svg width="24" height="17" style="margin-left:29px"><circle cx="13" cy="7" r="7" fill="#888"/><circle cx="6" cy="10" r="6" fill="#bbb"/><path d="M3 16c0-3 4-4 6-4l6-4c5-1 9 2 9 5 0 2-2 3-4 3z" fill="#fff"/></svg>
  <span style="margin-left:28px;width:62px;font-size:17px">ENG</span>
  <svg width="24" height="18" class="ln" viewBox="0 0 24 18" style="stroke:#fff"><path d="M1 6q11-10 22 0" style="stroke:#667"/><path d="M4 9q8-7 16 0M7 13q5-5 10 0"/><circle cx="12" cy="16" r="1"/></svg>
  <svg width="26" height="20" class="ln" viewBox="0 0 26 20" style="stroke:#fff;margin-left:11px"><path d="M1 7h4l6-5v16l-6-5H1zM14 7q3 3 0 6M17 4q5 6 0 12M20 1q7 9 0 18"/></svg>
  <svg width="25" height="17" class="ln" style="stroke:#fff;margin-left:12px"><rect x="1" y="1" width="19" height="14" rx="3"/><path d="M4 4h12v8H4z" fill="#fff"/><path d="M23 5v6" stroke-width="3"/></svg>
  <div class="text-end" style="width:98px">2:12 PM<br>6/4/2025</div></div>
 <span class="wm" lang="ar" dir="rtl" aria-hidden="true">خـ5ـسات</span>
</footer>
<script src="https://cdn.jsdelivr.net/npm/bootstrap@5.3.0/dist/js/bootstrap.bundle.min.js"></script>
</body>
</html>
